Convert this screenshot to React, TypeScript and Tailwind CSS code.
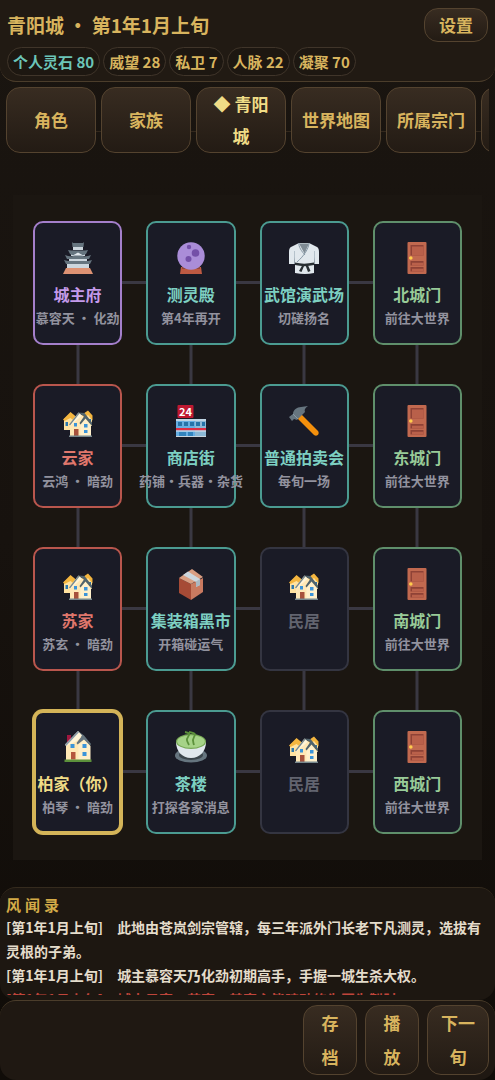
import type { ReactNode } from 'react';
import clsx from 'clsx';

type Tone = 'purple' | 'teal' | 'green' | 'red' | 'gray' | 'gold';

type Place = {
  id: string;
  name: string;
  note?: string;
  tone: Tone;
  icon: ReactNode;
};

const Icon = ({ children }: { children: ReactNode }) => (
  <svg viewBox="0 0 32 32" className="size-8 shrink-0" aria-hidden="true">
    {children}
  </svg>
);

const CastleIcon = () => (
  <Icon>
    <path d="M4 26h24l3 6H1z" fill="#dd9273" />
    <path d="M5 21h22v5H5z" fill="#ccd6dd" />
    <path d="M7 15h18v5H7z" fill="#ccd6dd" />
    <path d="M9 9h14v5H9z" fill="#ccd6dd" />
    <path d="M11 5h10v3H11z" fill="#ccd6dd" />
    <path d="M10 0l1 1h10l1-1-.5 5h-11z" fill="#66757f" />
    <path d="M6 8l3 .5h14l3-.5-2 4-2 1h-2l-4-2-4 2h-2l-2-1z" fill="#66757f" />
    <path d="M3 13l3 1 4 .5 6-3.500 6 3.500 4-.5 3-1-2 4H5z" fill="#66757f" />
    <path d="M2 18l4 1h20l4-1-2 4H4z" fill="#66757f" />
    <path d="M11 13.500l5-3 5 3z" fill="#e1e8ed" />
  </Icon>
);

const CrystalBallIcon = () => (
  <Icon>
    <path d="M6 25h20l1 7H5z" fill="#be5a42" />
    <path d="M7 24h18v3H7z" fill="#8f4639" />
    <circle cx="16" cy="14" r="13.700" fill="#aa8dd8" />
    <circle cx="20.500" cy="11" r="3.800" fill="#7450a8" />
    <circle cx="13.500" cy="17" r="3" fill="#7450a8" />
    <circle cx="14" cy="5" r="2.200" fill="#7450a8" />
  </Icon>
);

const GiIcon = () => (
  <Icon>
    <path d="M11 1h10l8 4c1.500 1 2 2.500 2 5v12h-4l-1-7v16c-6 1.300-12 1.300-19 0V15l-1 7H1V10c0-2.500.500-4 2-5z" fill="#e1e8ed" />
    <path d="M11 1.500h10l-4.500 10z" fill="#7f8b94" />
    <path d="M11 1c-1 3 3 9 6 12M21 1c0 5-5 13-12 19" stroke="#8899a6" strokeWidth="1" fill="none" />
    <path d="M6.500 9v13M26.500 9v13" stroke="#aab8c2" strokeWidth="0.800" />
    <path d="M7 20.500c6 1.500 12 1.500 19 0v2.500c-6 1.500-13 1.500-19 0z" fill="#292f33" />
    <path d="M15 22l-4 7 2.500 1 3-7zM17 22l3 8 2.500-1-3-7z" fill="#292f33" />
  </Icon>
);

const DoorIcon = () => (
  <Icon>
    <rect x="6.500" width="19" height="32" rx="1" fill="#c1694f" />
    <path d="M9.500 3h13v10.500h-13zM9.500 19h13v4.500h-13zM9.500 25h13v4.500h-13z" fill="#8f4236" />
    <path d="M11 4.500h11.500v9H11zM11 20.700h11.500v2.800H11zM11 26.700h11.500v2.800H11z" fill="#b9604a" />
    <circle cx="9.800" cy="16" r="1.800" fill="#ffcc4d" />
  </Icon>
);

const HousesIcon = () => (
  <Icon>
    <path d="M2 14l6-5 6 4v12H2zM21 10l5-3 4 5v9h-9z" fill="#ffe2a0" />
    <path d="M1 14.500L8.500 7l6 5-2 4L8.500 13 2.500 16zM19.500 10l6.500-4.500 4.500 5v5L26 10l-4 3z" fill="#f4b63f" />
    <path d="M3.500 17h2.500v4H3.500zM27 14h2v4h-2z" fill="#2c78ad" />
    <path d="M8 19l9-10 4 2 7 9v11H8z" fill="#ffe8b6" />
    <path d="M18.500 20l5-6 5.500 6.500V31H18.500z" fill="#fff0cb" />
    <path d="M16.500 7.500l6 .5 7.500 9.500v3.500l-6.500-7.500-5 6-1-1.500 4.500-6.500z" fill="#50636c" />
    <path d="M7 19.500L16.500 7.500l3.500 3-4 3.500-8 7z" fill="#fff5d8" />
    <path d="M7 19.500L16.500 7.500l1 1L8 20.500z" fill="#77888e" />
    <path d="M12 18h3v3.500h-3zM22 19h3.500v3.500H22zM22 25h3.500v3H22z" fill="#3b94d9" />
    <path d="M12 24h4.500v7H12z" fill="#a7523d" />
    <path d="M7 30.500h23V32H7z" fill="#77888e" />
  </Icon>
);

const HouseIcon = () => (
  <Icon>
    <path d="M5 4h4v8H5z" fill="#a0173f" />
    <path d="M4 13L16 2l12 12v15H4z" fill="#ffe8b6" />
    <path d="M16.500 14l6-6 6 7v14h-12z" fill="#ffefc9" />
    <path d="M16 0l6 4.500 7 8.500-1 1.500-6-6-6.500 5-1-1.500 5-6.500z" fill="#66757f" />
    <path d="M3 13.500L16 0l4 4.500-5 5.500-11 5z" fill="#fff5d8" />
    <path d="M3 13.500L16 0l1 1.200L4 15z" fill="#8899a6" />
    <path d="M8.500 13h4v4h-4zM20.500 13h4v4h-4zM20.500 21h4v4h-4z" fill="#3b94d9" />
    <path d="M9 21h4.500v7.500H9z" fill="#b4563e" />
    <path d="M2.500 28.500h27V31h-27z" fill="#5c913b" />
  </Icon>
);

const StoreIcon = () => (
  <Icon>
    <path d="M1 14h30v18H1z" fill="#66aee2" />
    <path d="M20 16h11v16H20z" fill="#8bb8d5" />
    <path d="M1 14h30v2H1z" fill="#bfd5e4" />
    <path d="M3 17h4v4H3zM9 17h4v4H9zM15 17h4v4h-4zM21 17h4v4h-4zM27 17h3v4h-3z" fill="#2673a8" />
    <path d="M1 23h30v2.500H1z" fill="#dd2e44" />
    <path d="M1 25.500h30v1H1z" fill="#e1e8ed" />
    <path d="M4 27h7v4H4zM13 27h5v4h-5z" fill="#3384bd" />
    <path d="M1 31h30v1H1z" fill="#ccd6dd" />
    <rect x="2.500" width="16" height="13" rx="1" fill="#be1931" />
    <text x="10.500" y="10.500" textAnchor="middle" fontSize="11" fill="#fff">
      24
    </text>
  </Icon>
);

const HammerIcon = () => (
  <Icon>
    <path d="M9 13l4-4 17 17c2 3-1 6-4 4z" fill="#f4900c" />
    <path d="M1 12l4-3c0-4 4-7 8-7l7-1c-3 2-4 4-3 6l-8 8-3-1-2 2z" fill="#66757f" />
    <path d="M5 9l5 5" stroke="#8899a6" strokeWidth="1" />
  </Icon>
);

const BoxIcon = () => (
  <Icon>
    <path d="M4 10l12 6v16L4 25z" fill="#a64b36" />
    <path d="M16 16l12-6v14l-12 8z" fill="#c97a60" />
    <path d="M4 10L17 1l11 8-12 7z" fill="#d99e82" />
    <path d="M8 7l5-3.500L25 11v6l-4 2v-5z" fill="#ccd6dd" />
    <path d="M21 13.500l4-2.500v6l-4 2z" fill="#aab8c2" />
  </Icon>
);

const TeaIcon = () => (
  <Icon>
    <ellipse cx="16" cy="24.500" rx="16" ry="7" fill="#66757f" />
    <ellipse cx="16" cy="24" rx="12" ry="5" fill="#3c464c" />
    <path d="M1 11h30c0 9-6 16-15 16S1 20 1 11z" fill="#e1e8ed" />
    <ellipse cx="16" cy="10.500" rx="15" ry="7.500" fill="#77a855" />
    <ellipse cx="16" cy="10.500" rx="13.800" ry="6.300" fill="#a6d388" />
    <path d="M10 1c5 1 5 2 3 5s-1 4 1 8M14 1c6 1 7 2 5 5s-1 4 0 8" stroke="#5c913b" strokeWidth="1.800" fill="none" />
  </Icon>
);

const stats = [
  { label: '个人灵石', value: 80, highlight: true },
  { label: '威望', value: 28 },
  { label: '私卫', value: 7 },
  { label: '人脉', value: 22 },
  { label: '凝聚', value: 70 },
];

const tabs = ['角色', '家族', '青阳城', '世界地图', '所属宗门'];

const places: Place[] = [
  { id: 'lord', name: '城主府', note: '慕容天 · 化劲', tone: 'purple', icon: <CastleIcon /> },
  { id: 'spirit', name: '测灵殿', note: '第4年再开', tone: 'teal', icon: <CrystalBallIcon /> },
  { id: 'dojo', name: '武馆演武场', note: '切磋扬名', tone: 'teal', icon: <GiIcon /> },
  { id: 'north', name: '北城门', note: '前往大世界', tone: 'green', icon: <DoorIcon /> },
  { id: 'yun', name: '云家', note: '云鸿 · 暗劲', tone: 'red', icon: <HousesIcon /> },
  { id: 'shops', name: '商店街', note: '药铺·兵器·杂货', tone: 'teal', icon: <StoreIcon /> },
  { id: 'auction', name: '普通拍卖会', note: '每旬一场', tone: 'teal', icon: <HammerIcon /> },
  { id: 'east', name: '东城门', note: '前往大世界', tone: 'green', icon: <DoorIcon /> },
  { id: 'su', name: '苏家', note: '苏玄 · 暗劲', tone: 'red', icon: <HousesIcon /> },
  { id: 'market', name: '集装箱黑市', note: '开箱碰运气', tone: 'teal', icon: <BoxIcon /> },
  { id: 'home-1', name: '民居', tone: 'gray', icon: <HousesIcon /> },
  { id: 'south', name: '南城门', note: '前往大世界', tone: 'green', icon: <DoorIcon /> },
  { id: 'bai', name: '柏家（你）', note: '柏琴 · 暗劲', tone: 'gold', icon: <HouseIcon /> },
  { id: 'tea', name: '茶楼', note: '打探各家消息', tone: 'teal', icon: <TeaIcon /> },
  { id: 'home-2', name: '民居', tone: 'gray', icon: <HousesIcon /> },
  { id: 'west', name: '西城门', note: '前往大世界', tone: 'green', icon: <DoorIcon /> },
];

const logs = [
  { date: '第1年1月上旬', text: '此地由苍岚剑宗管辖，每三年派外门长老下凡测灵，选拔有灵根的子弟。' },
  { date: '第1年1月上旬', text: '城主慕容天乃化劲初期高手，手握一城生杀大权。' },
  { date: '第1年1月上旬', text: '城中云家、苏家，其家主皆暗劲修为互为掣肘', danger: true },
];

const borderTone: Record<Tone, string> = {
  purple: 'border-[#a47fcb]',
  teal: 'border-[#4b9b91]',
  green: 'border-[#5f8f6b]',
  red: 'border-[#b9564d]',
  gray: 'border-[#343541]',
  gold: 'border-[#d4b458]',
};

const textTone: Record<Tone, string> = {
  purple: 'text-[#c49aeb]',
  teal: 'text-[#7dd0c2]',
  green: 'text-[#98cb98]',
  red: 'text-[#e0776c]',
  gray: 'text-[#62646f]',
  gold: 'text-[#f0dc86]',
};

const buttonStyle =
  'border border-[#54432f] bg-linear-to-b from-[#382c21] to-[#231b14] text-[17px] rounded-[14px]';

const PlaceCard = ({ place, index }: { place: Place; index: number }) => (
  <div className="relative h-[124px] min-w-0">
    {index % 4 < 3 && <span className="absolute left-full top-[60px] h-[3px] w-6 bg-[#3a3842]" />}
    {index < 12 && <span className="absolute left-1/2 top-full h-[39px] w-[3px] -translate-x-1/2 bg-[#3a3842]" />}
    <button
      type="button"
      className={clsx(
        'relative flex h-full w-full flex-col items-center rounded-[10px] bg-[#1a1b26]',
        place.tone === 'gold' ? 'border-[3px] pt-[18px] ring-1 ring-[#d4b458]' : 'border-2 pt-[19px]',
        borderTone[place.tone]
      )}
    >
      {place.icon}
      <span className={clsx('mt-2 whitespace-nowrap text-[16px] leading-6', textTone[place.tone])}>{place.name}</span>
      {place.note && <span className="whitespace-nowrap text-[13px] leading-6 text-[#92929e]">{place.note}</span>}
    </button>
  </div>
);

const App = () => {
  return (
    <div className="flex h-screen min-h-[1060px] flex-col overflow-hidden bg-linear-to-b from-[#1a1510] via-[#17120e] to-[#100c08] font-['Noto_Sans_CJK_SC',sans-serif] font-bold">
      <header className="rounded-b-2xl border-b border-[#4b3d2b] bg-[#211a13] px-[7px] pb-[5px] pt-2">
        <div className="flex items-center justify-between">
          <h1 className="text-[19px] leading-[34px] text-[#d8b45e]">青阳城 · 第1年1月上旬</h1>
          <button type="button" className={clsx(buttonStyle, 'h-[34px] px-3.5 leading-8 text-[#d8b45e]')}>
            设置
          </button>
        </div>
        <ul className="mt-[5px] flex gap-[3px]">
          {stats.map((stat) => (
            <li
              key={stat.label}
              className={clsx(
                'whitespace-nowrap rounded-full border border-[#40352a] bg-[#1d1711] px-[5px] text-[15px] leading-[27px]',
                stat.highlight ? 'text-[#6cc5b8]' : 'text-[#d8b45e]'
              )}
            >
              {stat.label} {stat.value}
            </li>
          ))}
        </ul>
      </header>

      <nav className="relative mx-1.5 mt-[5px] shrink-0">
        <span className="absolute inset-x-0 top-11 h-px bg-[#33281d]" />
        <div className="relative flex gap-[5px] overflow-hidden">
          {tabs.map((tab) => {
            const active = tab === '青阳城';
            return (
              <button
                key={tab}
                type="button"
                className={clsx(
                  buttonStyle,
                  'h-[66px] w-[90px] shrink-0 px-2.5 leading-8',
                  active ? 'text-[#f0dc86]' : 'text-[#d8b45e]'
                )}
              >
                {active ? `◆ ${tab}` : tab}
              </button>
            );
          })}
          <button type="button" aria-label="更多" className={clsx(buttonStyle, 'h-[66px] w-[90px] shrink-0')} />
        </div>
      </nav>

      <main className="flex flex-1 items-end px-[13px] pb-[27px]">
        <div className="grid w-full grid-cols-4 gap-x-6 gap-y-[39px] bg-[#1b1611] px-5 py-[26px]">
          {places.map((place, index) => (
            <PlaceCard key={place.id} place={place} index={index} />
          ))}
        </div>
      </main>

      <section className="h-[113px] shrink-0 rounded-2xl border-t border-[#352b1e] bg-[#1d1711] px-1.5 pt-1.5">
        <h2 className="text-[15px] leading-[21px] tracking-[4px] text-[#d4ab48]">风闻录</h2>
        <div className="h-20 overflow-hidden text-[14px] leading-6 text-[#e4dccb]">
          {logs.map((log) => (
            <p key={log.text} className={clsx(log.danger && 'text-[#c0453b]')}>
              [{log.date}]　{log.text}
            </p>
          ))}
        </div>
      </section>

      <footer className="flex shrink-0 justify-end gap-2 rounded-2xl border-t border-[#4b3d2b] bg-[#1f1812] px-1.5 pb-[5px] pt-1">
        <button type="button" className={clsx(buttonStyle, 'w-[54px] px-3 leading-[34px] text-[#d8b45e]')}>
          存档
        </button>
        <button type="button" className={clsx(buttonStyle, 'w-[54px] px-3 leading-[34px] text-[#d8b45e]')}>
          播放
        </button>
        <button type="button" className={clsx(buttonStyle, 'w-[62px] px-3 leading-[34px] text-[#d8b45e]')}>
          下一旬
        </button>
      </footer>
    </div>
  );
};

export default App;
